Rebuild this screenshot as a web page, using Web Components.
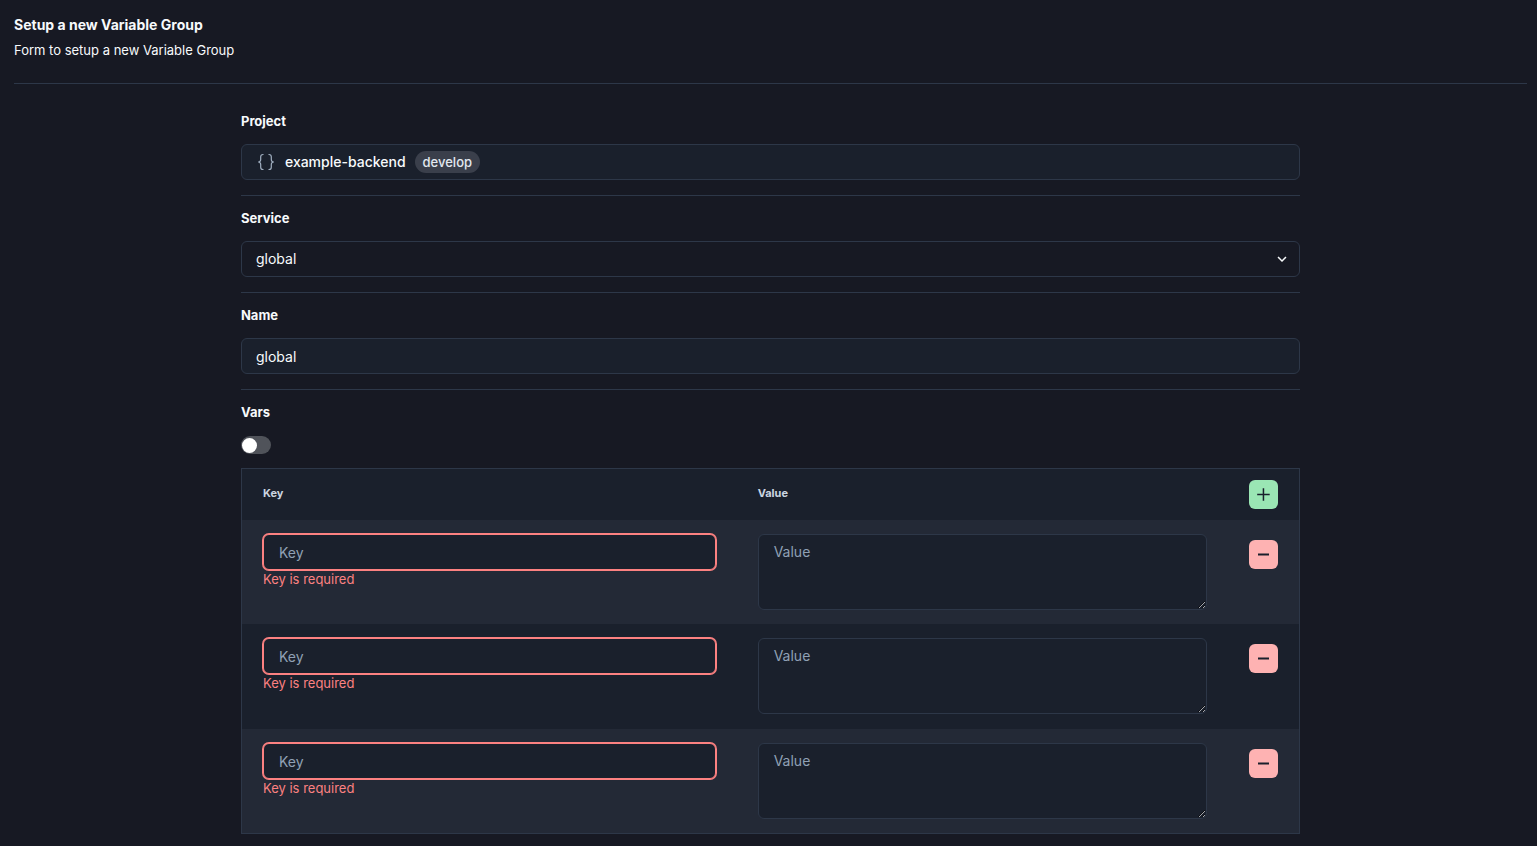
<!DOCTYPE html>
<html lang="en">
<head>
<meta charset="utf-8">
<title>Setup a new Variable Group</title>
<style>
  :root {
    --bg: #171923; --surface: #1a202c; --stripe: #232936; --line: #2d3748;
    --text: #f7fafc; --error: #fc8181; --placeholder: #90a0b5;
  }
  body { margin: 0; background: var(--bg); color: var(--text); font-family: Inter, sans-serif; font-size: 14px; line-height: 22px; }
  main { padding: 14px 10px 12px 14px; }
  form { width: 70%; margin: 28px auto 0; }
</style>
</head>
<body>
<main>
  <page-header><span slot="title">Setup a new Variable Group</span>Form to setup a new Variable Group</page-header>
  <form>
    <project-field badge="develop" name="example-backend">Project</project-field>
    <select-field value="global">Service</select-field>
    <text-field value="global">Name</text-field>
    <switch-field>Vars</switch-field>
    <vars-table rows="3"></vars-table>
  </form>
</main>
<script>
  const BASE = `
    :host { display: block; }
    * { box-sizing: border-box; }
    label { display: block; font-size: 13px; line-height: 18px; font-weight: 700; margin-bottom: 14px; }
    input, select, textarea, button { font: inherit; color: inherit; margin: 0; outline: none; }
    .field { border-bottom: 1px solid var(--line); padding-bottom: 15px; margin-bottom: 13px; }
    .box { display: block; width: 100%; height: 36px; padding: 0 14px; border: 1px solid var(--line);
           border-radius: 6px; background: var(--surface); font-size: 14px; line-height: 22px; }
  `;
  class Base extends HTMLElement {
    connectedCallback() {
      if (!this.shadowRoot) this.attachShadow({ mode: "open" }).innerHTML = `<style>${BASE}</style>` + this.render();
    }
    attr(name) { return this.getAttribute(name) || ""; }
  }

  customElements.define("page-header", class extends Base {
    render() {
      return `<style>
        header { border-bottom: 1px solid var(--line); padding-bottom: 22px; }
        h1 { margin: 0 0 4px; font-size: 14px; line-height: 22px; font-weight: 700; }
        p { margin: 0; font-size: 13px; line-height: 21px; }
      </style><header><h1><slot name="title"></slot></h1><p><slot></slot></p></header>`;
    }
  });

  customElements.define("project-field", class extends Base {
    render() {
      return `<style>
        .box { display: flex; align-items: center; gap: 9px; font-weight: 500; }
        svg { color: #a0aec0; }
        .badge { font-size: 13px; padding: 0 8px; border-radius: 11px; background: #3a3f4b; color: #e2e8f0; }
      </style><div class="field"><label for="project"><slot></slot></label>
      <output class="box" id="project">
        <svg width="20" height="18" viewBox="0 0 20 18" fill="none" stroke="currentColor" stroke-width="1.2">
          <path d="M7.500 1.500H7Q4.700 1.500 4.700 3.800V6.500Q4.700 9 2.200 9Q4.700 9 4.700 11.500V14.200Q4.700 16.500 7 16.500H7.500M12.500 1.500H13Q15.300 1.500 15.300 3.800V6.500Q15.300 9 17.800 9Q15.300 9 15.300 11.500V14.200Q15.300 16.500 13 16.500H12.500"/>
        </svg>
        <span>${this.attr("name")}</span><span class="badge">${this.attr("badge")}</span>
      </output></div>`;
    }
  });

  customElements.define("select-field", class extends Base {
    render() {
      return `<style>
        .wrap { display: grid; align-items: center; }
        .wrap > * { grid-area: 1 / 1; }
        select.box { appearance: none; background: var(--bg); }
        svg { justify-self: end; margin-right: 9px; pointer-events: none; }
      </style><div class="field"><label for="select"><slot></slot></label>
      <div class="wrap"><select class="box" id="select"><option>${this.attr("value")}</option></select>
      <svg width="18" height="18" viewBox="0 0 24 24" fill="currentColor"><path d="M16.59 8.59L12 13.17 7.41 8.59 6 10l6 6 6-6z"/></svg></div></div>`;
    }
  });

  customElements.define("text-field", class extends Base {
    render() {
      return `<div class="field"><label for="text"><slot></slot></label>
      <input class="box" id="text" type="text" value="${this.attr("value")}"></div>`;
    }
  });

  customElements.define("switch-field", class extends Base {
    render() {
      return `<style>
        label { margin-bottom: 15px; }
        input { appearance: none; display: flex; align-items: center; width: 30px; height: 18px; padding: 1px;
                border-radius: 9px; background: #50535a; margin-bottom: 14px; }
        input::before { content: ""; width: 15px; height: 15px; border-radius: 50%; background: #fff; }
        input:checked { background: #90cdf4; justify-content: flex-end; }
      </style><label for="switch"><slot></slot></label><input id="switch" type="checkbox" role="switch">`;
    }
  });

  customElements.define("icon-button", class extends Base {
    render() {
      const add = this.attr("kind") === "add";
      return `<style>
        button { display: grid; place-items: center; width: 29px; height: 29px; padding: 0; border: 0;
                 border-radius: 6px; background: ${add ? "#9ae6b4" : "#feb2b2"}; color: #1a202c; }
      </style><button type="button" aria-label="${add ? "Add" : "Remove"}">
      <svg width="15" height="15" viewBox="0 0 15 15" fill="currentColor">
        <path d="${add ? "M6.700 1.200h1.500v5.500h5.500v1.500H8.200v5.500H6.700V8.200H1.200V6.700h5.500z" : "M2 6.500h11v2H2z"}"/></svg></button>`;
    }
  });

  customElements.define("key-input", class extends Base {
    render() {
      return `<style>
        .box { border-color: var(--error); box-shadow: 0 0 0 1px var(--error); padding: 0 15px; }
        ::placeholder { color: var(--placeholder); opacity: 1; }
        p { margin: 0; font-size: 13px; line-height: 18px; color: var(--error); }
      </style><input class="box" type="text" placeholder="Key" aria-label="Key" aria-invalid="true" aria-describedby="error">
      <p id="error">Key is required</p>`;
    }
  });

  customElements.define("value-input", class extends Base {
    render() {
      return `<style>
        .box { height: 76px; padding: 6px 15px; resize: vertical; }
        ::placeholder { color: var(--placeholder); opacity: 1; }
      </style><textarea class="box" placeholder="Value" aria-label="Value"></textarea>`;
    }
  });

  customElements.define("vars-table", class extends Base {
    render() {
      const row = `<tr><td><key-input></key-input></td><td><value-input></value-input></td>
        <td><icon-button class="remove" kind="remove"></icon-button></td></tr>`;
      return `<style>
        .frame { border: 1px solid var(--line); background: var(--surface); }
        table { width: 100%; table-layout: fixed; border-collapse: collapse; }
        th { padding: 11px 21px; text-align: left; font-size: 11px; line-height: 14px; font-weight: 700; color: #cbd5e0; }
        th:not(:last-child) { padding-bottom: 14px; }
        td { padding: 14px 21px; vertical-align: top; }
        th:nth-child(1) { width: 46.8%; }
        th:nth-child(3) { width: 71px; }
        tbody tr:nth-child(odd) { background: var(--stripe); }
        tbody tr:nth-child(even) td { padding-bottom: 15px; }
        .remove { margin-top: 6px; }
      </style><div class="frame"><table>
        <thead><tr><th>Key</th><th>Value</th><th><icon-button kind="add"></icon-button></th></tr></thead>
        <tbody>${row.repeat(Number(this.attr("rows")))}</tbody></table></div>`;
    }
  });
</script>
</body>
</html>
